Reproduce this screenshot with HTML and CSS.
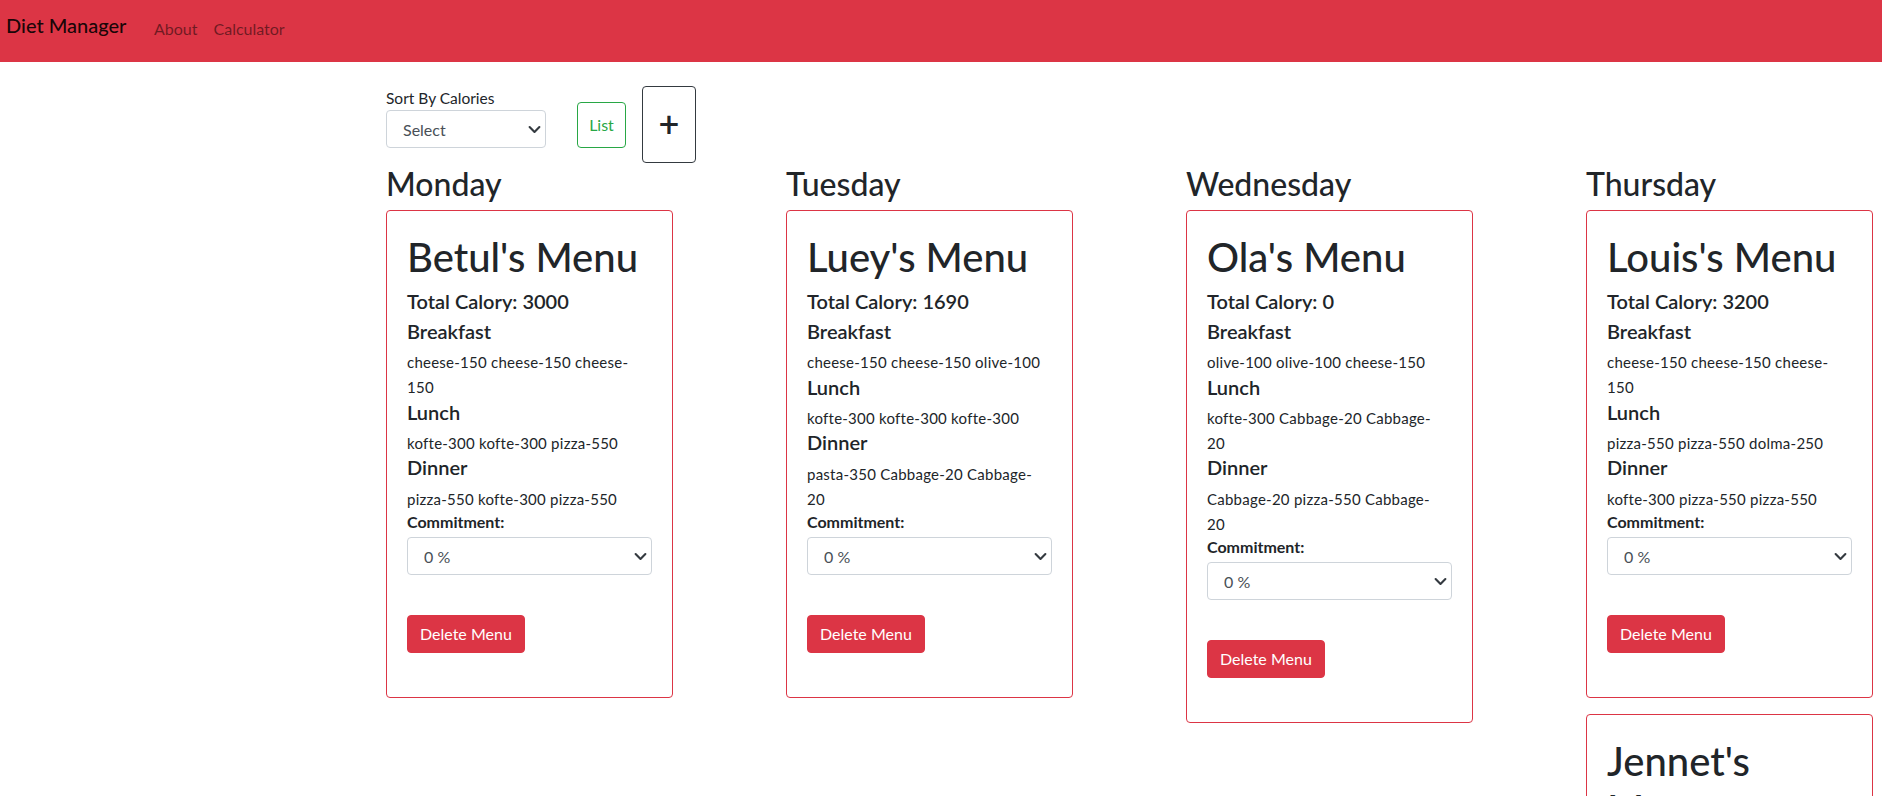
FILE: index.html
```html
<!DOCTYPE html>
<html lang="en">
<head>
<meta charset="utf-8">
<title>Diet Manager</title>
<link rel="stylesheet" href="styles.css">
</head>
<body>
<nav class="navbar">
  <a class="brand" href="#">Diet Manager</a>
  <ul class="nav-links">
    <li><a href="#">About</a></li>
    <li><a href="#">Calculator</a></li>
  </ul>
</nav>

<main class="page">
  <div class="toolbar">
    <div class="sort-group">
      <label class="sort-label">Sort By Calories</label>
      <select class="form-select sort-select"><option>Select</option></select>
    </div>
    <button class="btn btn-list">List</button>
    <button class="btn btn-add">+</button>
  </div>

  <div class="week">
    <section class="day">
      <h2 class="day-title">Monday</h2>
      <article class="menu-card">
        <h1 class="menu-title">Betul's Menu</h1>
        <h5 class="total">Total Calory: 3000</h5>
        <h5 class="meal">Breakfast</h5>
        <p class="items">cheese-150 cheese-150 cheese-150</p>
        <h5 class="meal">Lunch</h5>
        <p class="items">kofte-300 kofte-300 pizza-550</p>
        <h5 class="meal">Dinner</h5>
        <p class="items">pizza-550 kofte-300 pizza-550</p>
        <label class="commit-label">Commitment:</label>
        <select class="form-select"><option>0 %</option></select>
        <button class="btn btn-delete">Delete Menu</button>
      </article>
    </section>

    <section class="day">
      <h2 class="day-title">Tuesday</h2>
      <article class="menu-card">
        <h1 class="menu-title">Luey's Menu</h1>
        <h5 class="total">Total Calory: 1690</h5>
        <h5 class="meal">Breakfast</h5>
        <p class="items">cheese-150 cheese-150 olive-100</p>
        <h5 class="meal">Lunch</h5>
        <p class="items">kofte-300 kofte-300 kofte-300</p>
        <h5 class="meal">Dinner</h5>
        <p class="items">pasta-350 Cabbage-20 Cabbage-20</p>
        <label class="commit-label">Commitment:</label>
        <select class="form-select"><option>0 %</option></select>
        <button class="btn btn-delete">Delete Menu</button>
      </article>
    </section>

    <section class="day">
      <h2 class="day-title">Wednesday</h2>
      <article class="menu-card">
        <h1 class="menu-title">Ola's Menu</h1>
        <h5 class="total">Total Calory: 0</h5>
        <h5 class="meal">Breakfast</h5>
        <p class="items">olive-100 olive-100 cheese-150</p>
        <h5 class="meal">Lunch</h5>
        <p class="items">kofte-300 Cabbage-20 Cabbage-20</p>
        <h5 class="meal">Dinner</h5>
        <p class="items">Cabbage-20 pizza-550 Cabbage-20</p>
        <label class="commit-label">Commitment:</label>
        <select class="form-select"><option>0 %</option></select>
        <button class="btn btn-delete">Delete Menu</button>
      </article>
    </section>

    <section class="day">
      <h2 class="day-title">Thursday</h2>
      <article class="menu-card">
        <h1 class="menu-title">Louis's Menu</h1>
        <h5 class="total">Total Calory: 3200</h5>
        <h5 class="meal">Breakfast</h5>
        <p class="items">cheese-150 cheese-150 cheese-150</p>
        <h5 class="meal">Lunch</h5>
        <p class="items">pizza-550 pizza-550 dolma-250</p>
        <h5 class="meal">Dinner</h5>
        <p class="items">kofte-300 pizza-550 pizza-550</p>
        <label class="commit-label">Commitment:</label>
        <select class="form-select"><option>0 %</option></select>
        <button class="btn btn-delete">Delete Menu</button>
      </article>
      <article class="menu-card">
        <h1 class="menu-title">Jennet's Menu</h1>
        <h5 class="total">Total Calory: 1500</h5>
        <h5 class="meal">Breakfast</h5>
        <p class="items">olive-100 cheese-150 olive-100</p>
        <h5 class="meal">Lunch</h5>
        <p class="items">dolma-250 kofte-300 pasta-350</p>
        <h5 class="meal">Dinner</h5>
        <p class="items">pizza-550 Cabbage-20 Cabbage-20</p>
        <label class="commit-label">Commitment:</label>
        <select class="form-select"><option>0 %</option></select>
        <button class="btn btn-delete">Delete Menu</button>
      </article>
    </section>
  </div>
</main>
</body>
</html>
```

FILE: styles.css
```css
* {
  box-sizing: border-box;
}

html, body {
  overflow: hidden;
}

body {
  margin: 0;
  font-family: Lato, "Noto Sans", sans-serif;
  font-size: 16px;
  line-height: 1.5;
  color: #212529;
  background: #fff;
}

/* ---------- navbar ---------- */
.navbar {
  height: 62px;
  background: #dc3545;
  display: flex;
  align-items: flex-start;
  padding-left: 6px;
}

.brand {
  flex: 0 0 140px;
  padding-top: 10px;
  font-size: 20px;
  line-height: 30px;
  font-weight: 500;
  color: rgba(0, 0, 0, 0.9);
  text-decoration: none;
}

.nav-links {
  display: flex;
  list-style: none;
  margin: 0;
  padding: 17px 0 0;
}

.nav-links a {
  display: block;
  padding: 0 8px;
  font-size: 16px;
  line-height: 24px;
  color: rgba(0, 0, 0, 0.5);
  text-decoration: none;
}

/* ---------- page ---------- */
.page {
  margin-left: 386px;
  padding-top: 24px;
}

.toolbar {
  display: flex;
  align-items: flex-start;
}

.sort-group {
  width: 160px;
  padding-top: 1px;
}

.sort-label {
  display: block;
  font-size: 15.5px;
  line-height: 22px;
  margin-bottom: 1px;
}

.form-select {
  display: block;
  width: 100%;
  height: 38px;
  padding: 0 36px 0 16px;
  font-family: inherit;
  font-size: 16px;
  color: #495057;
  background-color: #fff;
  background-image: url("data:image/svg+xml,%3csvg xmlns='http://www.w3.org/2000/svg' viewBox='0 0 16 16'%3e%3cpath fill='none' stroke='%23343a40' stroke-linecap='round' stroke-linejoin='round' stroke-width='2.6' d='m2 5 6 6 6-6'/%3e%3c/svg%3e");
  background-repeat: no-repeat;
  background-position: right 4px center;
  background-size: 13px 13px;
  border: 1px solid #ced4da;
  border-radius: 4px;
  appearance: none;
  -webkit-appearance: none;
}

.btn {
  font-family: inherit;
  font-size: 16px;
  line-height: 24px;
  border-radius: 4px;
  background: transparent;
  padding: 0 12px;
  cursor: pointer;
}

.btn-list {
  margin: 16px 0 0 31px;
  width: 49px;
  height: 46px;
  padding: 0;
  color: #28a745;
  border: 1px solid #28a745;
}

.btn-add {
  margin-left: 16px;
  width: 54px;
  height: 77px;
  padding: 0 0 3px;
  font-size: 36px;
  line-height: 1;
  font-weight: 600;
  color: #212529;
  border: 1px solid #343a40;
}

/* ---------- week ---------- */
.week {
  display: flex;
  align-items: flex-start;
  gap: 113px;
  padding-top: 2px;
}

.day {
  flex: 0 0 287px;
  display: flex;
  flex-direction: column;
  gap: 16px;
}

.day-title {
  margin: 0 0 -9px;
  font-size: 32px;
  line-height: 38.4px;
  font-weight: 500;
}

.menu-card {
  border: 1px solid #dc3545;
  border-radius: 4px;
  padding: 21.5px 20px 20px;
}

.menu-title {
  margin: 0 0 8px;
  font-size: 40px;
  line-height: 48px;
  font-weight: 500;
}

.total {
  margin: 0 0 6.8px;
  font-size: 20px;
  line-height: 24px;
  font-weight: 600;
}

.meal {
  margin: 0 0 8.4px;
  font-size: 20px;
  line-height: 22px;
  font-weight: 600;
}

.items {
  max-width: 238px;
  margin: 0 0 0.5px;
  font-size: 15px;
  line-height: 25px;
  letter-spacing: 0.25px;
}

.commit-label {
  display: block;
  margin-bottom: 5px;
  font-size: 16px;
  line-height: 20px;
  font-weight: 700;
}

.btn-delete {
  display: block;
  margin: 40px 0 24px;
  height: 38px;
  color: #fff;
  background: #dc3545;
  border: 1px solid #dc3545;
}
```
